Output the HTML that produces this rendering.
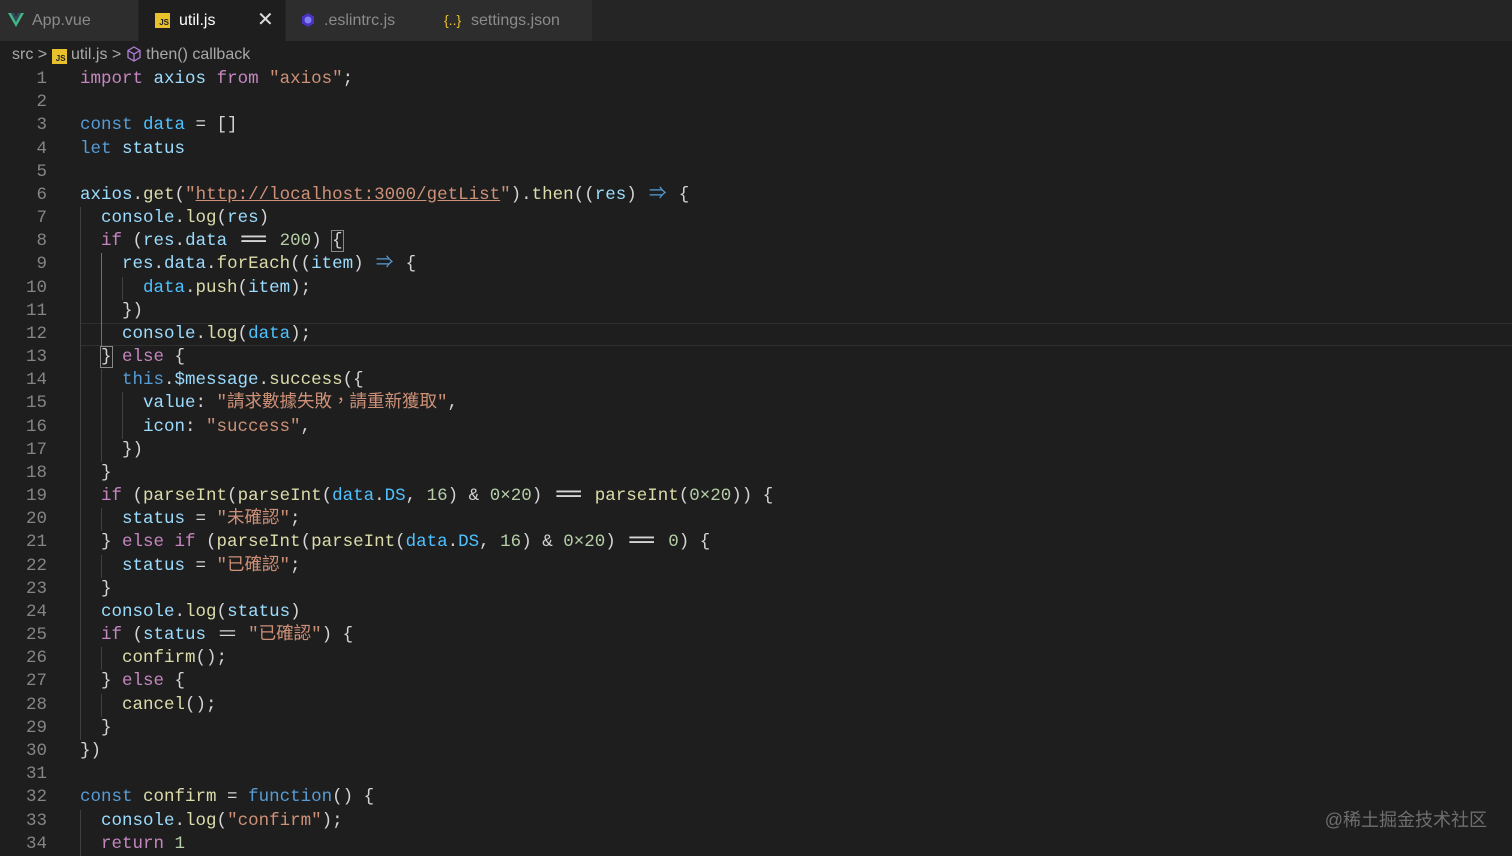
<!DOCTYPE html>
<html><head><meta charset="utf-8">
<style>
*{margin:0;padding:0;box-sizing:border-box}
body{width:1512px;height:853px;background:#1e1e1e;overflow:hidden;position:relative;font-family:"Liberation Sans","Noto Sans CJK SC",sans-serif}
.tabs{position:absolute;left:0;top:0;width:1512px;height:41px;background:#252526}
.tab{position:absolute;top:0;height:41px;background:#2d2d2d;color:#8b8b8b;font-size:16px;line-height:41px}
.tab.act{background:#1e1e1e;color:#fff}
.crumb{position:absolute;top:44px;left:12px;color:#a9a9a9;font-size:16px;line-height:22px;white-space:nowrap}
.js{display:inline-block;width:15px;height:15px;background:#e8c12c;color:#222;font-size:8px;font-weight:bold;line-height:20px;text-align:right;padding-right:1px;vertical-align:-2px}
.code{position:absolute;top:68px;left:0;width:1512px;font-family:"Liberation Mono","Noto Sans CJK TC",monospace;font-size:17.5px;line-height:23.18px;color:#d4d4d4}
.l{height:23.18px;position:relative;overflow:visible}
.ln{position:absolute;left:0;width:47px;text-align:right;color:#858585}
.t{position:absolute;left:80px;white-space:pre;top:0}
.g{display:inline-block;width:2ch;box-shadow:inset 1px 0 #404040;height:23.18px;vertical-align:top}
.ga{box-shadow:inset 1px 0 #707070}
.k{color:#c586c0}.b{color:#569cd6}.v{color:#9cdcfe}.f{color:#dcdcaa}.s{color:#ce9178}.n{color:#b5cea8}.c{color:#4fc1ff}
.eq3{display:inline-block;width:3ch;text-align:center;transform:scaleX(2.8);font-weight:bold}
.eq2{display:inline-block;width:2ch;text-align:center;transform:scaleX(1.8)}
.ar{display:inline-block;width:2ch;text-align:center;color:#569cd6}
.cur{position:absolute;left:80px;right:0;top:323px;height:23px;border-top:1px solid #2f2f2f;border-bottom:1px solid #2f2f2f}
.wm{position:absolute;right:25px;top:806px;color:#6e6e6e;font-size:18px}
</style></head><body>
<div class="tabs">
 <div class="tab" style="left:0;width:138px"><svg style="position:absolute;left:8px;top:13px" width="16" height="14" viewBox="0 0 16 14"><path d="M0 0h3l5 9 5-9h3L8 14z" fill="#41b883"/><path d="M3 0h3l2 4 2-4h3L8 9z" fill="#35495e"/></svg><span style="position:absolute;left:32px">App.vue</span></div>
 <div class="tab act" style="left:139px;width:146px"><span class="js" style="position:absolute;left:16px;top:13px">JS</span><span style="position:absolute;left:40px">util.js</span><span style="position:absolute;left:118px;font-size:20px;color:#ddd">✕</span></div>
 <div class="tab" style="left:286px;width:306px"><svg style="position:absolute;left:14px;top:12px" width="16" height="16" viewBox="0 0 16 16"><polygon points="8,1 14,4.5 14,11.5 8,15 2,11.5 2,4.5" fill="#4b32c3"/><circle cx="8" cy="8" r="3.5" fill="#8080f2"/></svg><span style="position:absolute;left:38px">.eslintrc.js</span>
 <span style="position:absolute;left:158px;color:#e8c12c;font-size:14px">{..}</span><span style="position:absolute;left:185px">settings.json</span></div>
</div>
<div class="crumb">src <span style="color:#aaa">&gt;</span> <span class="js">JS</span> util.js <span>&gt;</span> <svg width="16" height="16" viewBox="0 0 16 16" style="vertical-align:-3px"><path d="M8 1l6 3.5v7L8 15l-6-3.5v-7zM2 4.5L8 8l6-3.5M8 8v7" fill="none" stroke="#b180d7" stroke-width="1.3"/></svg> then() callback</div>
<div class="cur"></div>
<div class="code"><div class="l"><span class="ln">1</span><span class="t"><span class="k">import</span> <span class="v">axios</span> <span class="k">from</span> <span class="s">"axios"</span>;</span></div><div class="l"><span class="ln">2</span></div><div class="l"><span class="ln">3</span><span class="t"><span class="b">const</span> <span class="c">data</span> = []</span></div><div class="l"><span class="ln">4</span><span class="t"><span class="b">let</span> <span class="v">status</span></span></div><div class="l"><span class="ln">5</span></div><div class="l"><span class="ln">6</span><span class="t"><span class="v">axios</span>.<span class="f">get</span>(<span class="s">"<u>http://localhost:3000/getList</u>"</span>).<span class="f">then</span>((<span class="v">res</span>) <span class="ar">⇒</span> {</span></div><div class="l"><span class="ln">7</span><span class="t"><span class="g"></span><span class="v">console</span>.<span class="f">log</span>(<span class="v">res</span>)</span></div><div class="l"><span class="ln">8</span><span class="t"><span class="g"></span><span class="k">if</span> (<span class="v">res</span>.<span class="v">data</span> <span class="eq3">=</span> <span class="n">200</span>) <span style="outline:1px solid #888">{</span></span></div><div class="l"><span class="ln">9</span><span class="t"><span class="g"></span><span class="g ga"></span><span class="v">res</span>.<span class="v">data</span>.<span class="f">forEach</span>((<span class="v">item</span>) <span class="ar">⇒</span> {</span></div><div class="l"><span class="ln">10</span><span class="t"><span class="g"></span><span class="g ga"></span><span class="g"></span><span class="c">data</span>.<span class="f">push</span>(<span class="v">item</span>);</span></div><div class="l"><span class="ln">11</span><span class="t"><span class="g"></span><span class="g ga"></span>})</span></div><div class="l"><span class="ln">12</span><span class="t"><span class="g"></span><span class="g ga"></span><span class="v">console</span>.<span class="f">log</span>(<span class="c">data</span>);</span></div><div class="l"><span class="ln">13</span><span class="t"><span class="g"></span><span style="outline:1px solid #888">}</span> <span class="k">else</span> {</span></div><div class="l"><span class="ln">14</span><span class="t"><span class="g"></span><span class="g"></span><span class="b">this</span>.<span class="v">$message</span>.<span class="f">success</span>({</span></div><div class="l"><span class="ln">15</span><span class="t"><span class="g"></span><span class="g"></span><span class="g"></span><span class="v">value</span>: <span class="s">"請求數據失敗，請重新獲取"</span>,</span></div><div class="l"><span class="ln">16</span><span class="t"><span class="g"></span><span class="g"></span><span class="g"></span><span class="v">icon</span>: <span class="s">"success"</span>,</span></div><div class="l"><span class="ln">17</span><span class="t"><span class="g"></span><span class="g"></span>})</span></div><div class="l"><span class="ln">18</span><span class="t"><span class="g"></span>}</span></div><div class="l"><span class="ln">19</span><span class="t"><span class="g"></span><span class="k">if</span> (<span class="f">parseInt</span>(<span class="f">parseInt</span>(<span class="c">data</span>.<span class="c">DS</span>, <span class="n">16</span>) &amp; <span class="n">0×20</span>) <span class="eq3">=</span> <span class="f">parseInt</span>(<span class="n">0×20</span>)) {</span></div><div class="l"><span class="ln">20</span><span class="t"><span class="g"></span><span class="g"></span><span class="v">status</span> = <span class="s">"未確認"</span>;</span></div><div class="l"><span class="ln">21</span><span class="t"><span class="g"></span>} <span class="k">else if</span> (<span class="f">parseInt</span>(<span class="f">parseInt</span>(<span class="c">data</span>.<span class="c">DS</span>, <span class="n">16</span>) &amp; <span class="n">0×20</span>) <span class="eq3">=</span> <span class="n">0</span>) {</span></div><div class="l"><span class="ln">22</span><span class="t"><span class="g"></span><span class="g"></span><span class="v">status</span> = <span class="s">"已確認"</span>;</span></div><div class="l"><span class="ln">23</span><span class="t"><span class="g"></span>}</span></div><div class="l"><span class="ln">24</span><span class="t"><span class="g"></span><span class="v">console</span>.<span class="f">log</span>(<span class="v">status</span>)</span></div><div class="l"><span class="ln">25</span><span class="t"><span class="g"></span><span class="k">if</span> (<span class="v">status</span> <span class="eq2">=</span> <span class="s">"已確認"</span>) {</span></div><div class="l"><span class="ln">26</span><span class="t"><span class="g"></span><span class="g"></span><span class="f">confirm</span>();</span></div><div class="l"><span class="ln">27</span><span class="t"><span class="g"></span>} <span class="k">else</span> {</span></div><div class="l"><span class="ln">28</span><span class="t"><span class="g"></span><span class="g"></span><span class="f">cancel</span>();</span></div><div class="l"><span class="ln">29</span><span class="t"><span class="g"></span>}</span></div><div class="l"><span class="ln">30</span><span class="t">})</span></div><div class="l"><span class="ln">31</span></div><div class="l"><span class="ln">32</span><span class="t"><span class="b">const</span> <span class="f">confirm</span> = <span class="b">function</span>() {</span></div><div class="l"><span class="ln">33</span><span class="t"><span class="g"></span><span class="v">console</span>.<span class="f">log</span>(<span class="s">"confirm"</span>);</span></div><div class="l"><span class="ln">34</span><span class="t"><span class="g"></span><span class="k">return</span> <span class="n">1</span></span></div></div>
<div class="wm">@稀土掘金技术社区</div>
</body></html>
